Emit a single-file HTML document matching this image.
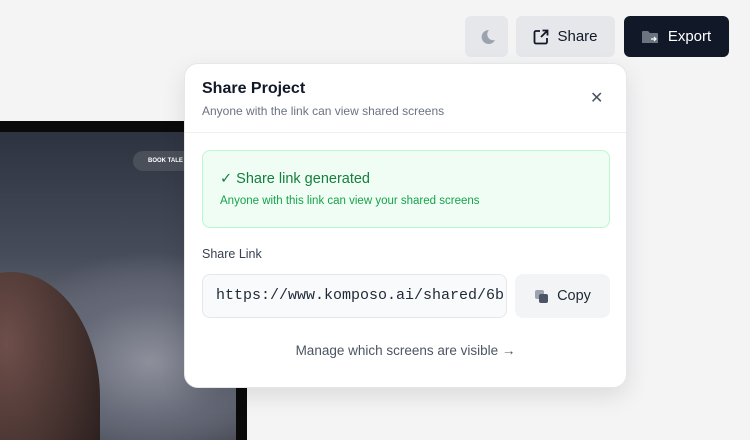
<!DOCTYPE html>
<html><head><style>
*{box-sizing:border-box;margin:0;padding:0}
html,body{width:750px;height:440px;overflow:hidden}
body{background:#f4f4f5;position:relative;font-family:"Liberation Sans",sans-serif}
.frame{position:absolute;left:0;top:121px;width:247px;height:319px;background:#0a0a0a}
.photo{position:absolute;left:0;top:132px;width:236px;height:308px;background:radial-gradient(ellipse 150px 110px at 150px 230px,#8d909b 0%,#656977 55%,transparent 100%),linear-gradient(180deg,#2e3340 0%,#474c5a 40%,#6e717c 70%,#454852 100%);overflow:hidden}
.shoulder{position:absolute;left:-70px;top:140px;width:170px;height:240px;border-radius:50% 55% 0 0;background:radial-gradient(ellipse at 45% 30%,#6e4e4a 0%,#42302d 55%,#1d1616 100%)}
.pill{position:absolute;left:133px;top:151px;width:60px;height:20px;border-radius:10px;background:#4b4f5a;color:#fff;font-size:6px;font-weight:bold;line-height:20px;padding-left:15px}
.btn{position:absolute;top:16px;height:41px;border-radius:6px;display:flex;align-items:center;justify-content:center;font-size:15px}
.modal{position:absolute;left:184px;top:63px;width:443px;height:325px;background:#fff;border-radius:14px;border:1px solid #e5e7eb;box-shadow:0 8px 24px rgba(0,0,0,.1)}
</style></head><body>
<div class="frame"></div>
<div class="photo"><div class="shoulder"></div></div>
<div class="pill">BOOK TALE</div>
<div class="btn" style="left:465px;width:43px;background:#e5e7eb">
<svg width="20" height="20" viewBox="0 0 20 20"><path d="M12 3a7 7 0 1 0 6 10A6 6 0 0 1 12 3z" fill="#9ca3af"/></svg></div>
<div class="btn" style="left:516px;width:99px;background:#e5e7eb;color:#111827">
<svg width="16" height="16" viewBox="0 0 16 16" style="margin-right:8px"><path d="M7 2H3a1.5 1.5 0 0 0-1.5 1.5v9.5A1.5 1.5 0 0 0 3 14.5h9.5A1.5 1.5 0 0 0 14 13V9M9.5 1.5h5v5M14.5 1.5L8 8" fill="none" stroke="#111827" stroke-width="1.8"/></svg>Share</div>
<div class="btn" style="left:624px;width:105px;background:#111827;color:#fff">
<svg width="16" height="14" viewBox="0 0 16 14" style="margin-right:10px"><path d="M0 2a1 1 0 0 1 1-1h5l2 2h7a1 1 0 0 1 1 1v9H0z" fill="#6b7280"/><path d="M9 9h5M12 7l2 2-2 2" stroke="#fff" stroke-width="1.2" fill="none"/></svg>Export</div>
<div class="modal">
<div style="position:absolute;left:17px;top:16px;font-size:16px;font-weight:bold;color:#111827">Share Project</div>
<div style="position:absolute;left:17px;top:40px;font-size:12px;color:#6b7280">Anyone with the link can view shared screens</div>
<div style="position:absolute;left:405px;top:24px;font-size:16px;color:#4b5563">✕</div>
<div style="position:absolute;left:0;right:0;top:68px;border-top:1px solid #eef0f2"></div>
<div style="position:absolute;left:17px;top:86px;width:408px;height:78px;background:#f0fdf4;border:1px solid #bbf7d0;border-radius:8px">
<div style="position:absolute;left:17px;top:20px;font-size:14.5px;color:#15803d">✓ Share link generated</div>
<div style="position:absolute;left:17px;top:44px;font-size:11.5px;color:#16a34a">Anyone with this link can view your shared screens</div></div>
<div style="position:absolute;left:17px;top:183px;font-size:12.5px;color:#374151">Share Link</div>
<div style="position:absolute;left:17px;top:210px;width:305px;height:44px;background:#f9fafb;border:1px solid #e5e7eb;border-radius:8px;font-family:'Liberation Mono',monospace;font-size:15px;color:#1f2937;line-height:42px;padding-left:13px;white-space:nowrap;overflow:hidden">https://www.komposo.ai/shared/6b</div>
<div style="position:absolute;left:330px;top:210px;width:95px;height:44px;background:#f3f4f6;border-radius:8px;font-size:14.5px;color:#1f2937;display:flex;align-items:center;justify-content:center">
<svg width="15" height="15" viewBox="0 0 15 15" style="margin-right:8px"><rect x="1" y="1" width="9" height="9" rx="2" fill="#9ca3af"/><rect x="5" y="5" width="9" height="9" rx="2" fill="#4b5563"/></svg>Copy</div>
<div style="position:absolute;left:0;right:0;top:279px;text-align:center;font-size:13.5px;color:#4b5563">Manage which screens are visible →</div>
</div>
</body></html>
